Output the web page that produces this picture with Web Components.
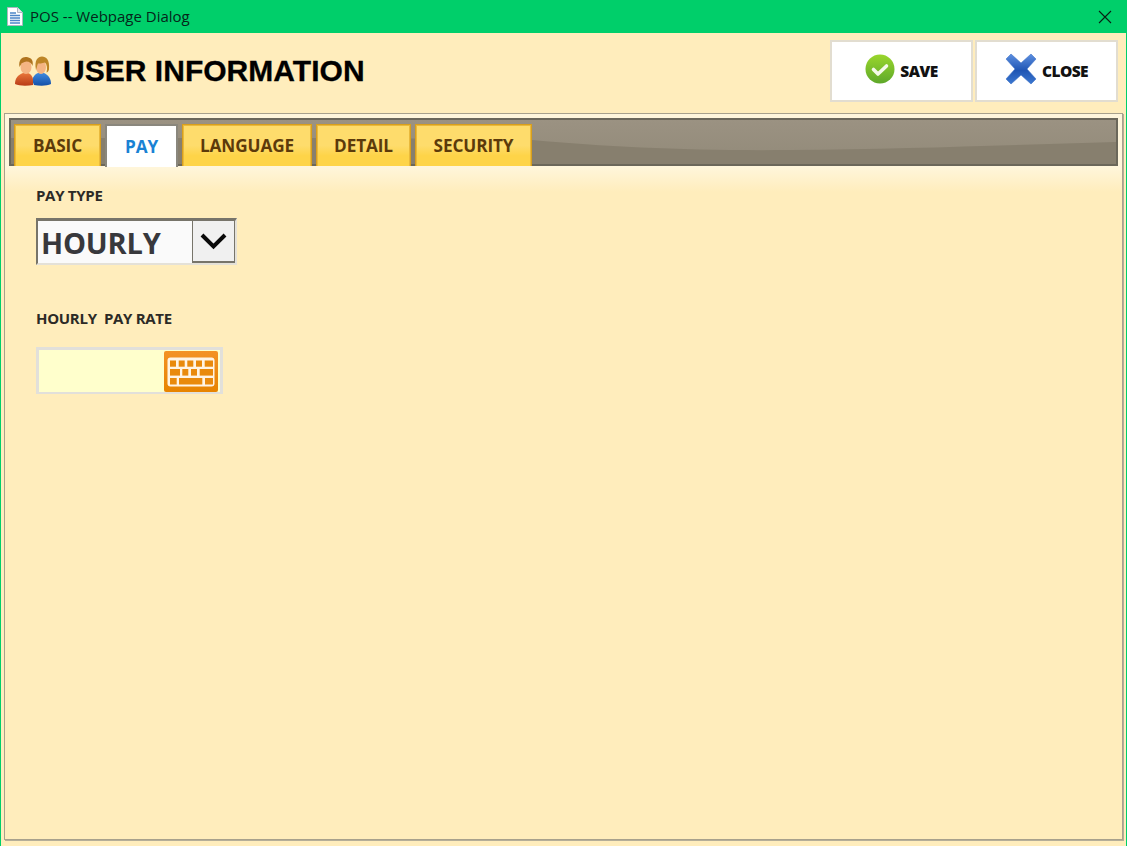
<!DOCTYPE html>
<html><head><meta charset="utf-8"><title>POS</title>
<style>
html,body{margin:0;padding:0;height:100%;overflow:hidden}
body{font-family:"Open Sans",sans-serif}
pos-dialog{width:1127px;height:846px}
</style></head><body>
<pos-dialog></pos-dialog>
<script>
function def(name,html){
  customElements.define(name,class extends HTMLElement{
    constructor(){super();this.attachShadow({mode:'open'}).innerHTML=html(this);}
  });
}
const ICON_PAGE=`<svg width="16" height="19" viewBox="0 0 16 19"><path d="M.5.5h10l5 5v13H.5z" fill="#fff" stroke="#aeb6c0"/><path d="M10.500.5v5h5" fill="#e4e9ef" stroke="#aeb6c0"/><path d="M3 6h6M3 8.500h10M3 11h10M3 13.500h10M3 16h10" stroke="#4d86c8" stroke-width="1.300"/></svg>`;
const ICON_USERS=`<svg width="38" height="30" viewBox="0 0 38 30"><defs>
<linearGradient id="r" x1="0" y1="0" x2="0" y2="1"><stop offset="0" stop-color="#e8763a"/><stop offset="1" stop-color="#b93c17"/></linearGradient>
<linearGradient id="b" x1="0" y1="0" x2="0" y2="1"><stop offset="0" stop-color="#3f8ade"/><stop offset="1" stop-color="#1450a8"/></linearGradient></defs>
<path d="M20 29c6 1 13 1 17-1 0-6-3-9-7-11h-6c-3 1-5 4-6 7z" fill="url(#b)"/>
<path d="M19 29c-6 1-14 1-18-1 0-6 3-9 8-11h5c3 1 5 4 5 7z" fill="url(#r)"/>
<ellipse cx="12" cy="11" rx="5.500" ry="7" fill="#f4b483"/>
<path d="M5.500 11C4 3 9 .5 12.500 1S20 3 18.500 10c-1-3-3-4.500-6-4.500-3 1-5 1-5.500 3z" fill="#b0741f"/>
<ellipse cx="27" cy="11" rx="5" ry="7" fill="#f4b483"/>
<path d="M22 14C20 4 24 .5 28 .5s8 3 7 13c-.5 2-1.500 3-2.500 3 1-4 .5-8-1.500-10-3 1-6 1-7 1-1 2-1 4-2 6.500z" fill="#bd8526"/>
</svg>`;
const ICON_OK=`<svg width="30" height="30" viewBox="0 0 30 30"><defs><linearGradient id="g" x1="0" y1="0" x2="0" y2="1"><stop offset="0" stop-color="#9ad62c"/><stop offset="1" stop-color="#5ea82a"/></linearGradient></defs><circle cx="15" cy="15" r="14.500" fill="url(#g)"/><path d="M8.500 15.500l4.500 4.500 8.500-8" fill="none" stroke="#f4f9e8" stroke-width="3.600" stroke-linecap="round" stroke-linejoin="round"/></svg>`;
const ICON_X=`<svg width="32" height="32" viewBox="0 0 32 32"><defs><linearGradient id="x" x1="0" y1="0" x2="0" y2="1"><stop offset="0" stop-color="#5d8fe0"/><stop offset=".55" stop-color="#1f55b4"/><stop offset="1" stop-color="#3c78d0"/></linearGradient></defs><path d="M6 1l10 9L26 1l5 5-9 10 9 10-5 5-10-9-10 9-5-5 9-10L1 6z" fill="url(#x)" stroke="#3f74c8" stroke-width=".6" stroke-linejoin="round"/></svg>`;
const ICON_KB=`<svg width="48" height="30" viewBox="0 0 48 30"><rect x=".5" y=".5" width="47" height="29" rx="3" fill="#fff4e4"/>
<g fill="#e98a0c"><rect x="3" y="3.500" width="6" height="6.200"/><rect x="11.700" y="3.500" width="6" height="6.200"/><rect x="20.300" y="3.500" width="6" height="6.200"/><rect x="29" y="3.500" width="6" height="6.200"/><rect x="37.700" y="3.500" width="8.300" height="6.200"/>
<rect x="3" y="12" width="10" height="6.600"/><rect x="15.300" y="12" width="6" height="6.600"/><rect x="24" y="12" width="6" height="6.600"/><rect x="32.700" y="12" width="13.300" height="6.600"/>
<rect x="3" y="21" width="6.700" height="6.500"/><rect x="12" y="21" width="23.300" height="6.500"/><rect x="38" y="21" width="8" height="6.500"/></g></svg>`;
const ICON_CLOSE=`<svg width="14" height="14" viewBox="0 0 14 14"><path d="M1 1l12 12M13 1L1 13" stroke="#0a1f14" stroke-width="1.100"/></svg>`;

def('title-bar',h=>`<style>:host{display:flex;align-items:center;height:33px;background:#00cf6a;color:#06251a;font:15px/33px "Open Sans",sans-serif;padding:0 15px 0 7px;box-sizing:border-box}
.t{margin-left:7px;flex:1}svg{display:block}</style>${ICON_PAGE}<span class="t"><slot></slot></span>${ICON_CLOSE}`);

def('action-button',h=>`<style>:host{display:flex;align-items:center;justify-content:center;gap:5px;width:143px;height:62px;box-sizing:border-box;background:#fff;border:2px solid #e2ddd0;font:800 15.500px "Open Sans",sans-serif;color:#111;letter-spacing:-.55px}
::slotted(svg){display:block}</style><slot name="icon"></slot><slot></slot>`);

def('tab-item',h=>`<style>:host{display:flex;align-items:center;justify-content:center;height:42px;margin-bottom:-2px;box-sizing:border-box;border:1px solid #d99f1c;border-bottom:0;box-shadow:inset 1px 1px 0 #e9b93c,inset -1px 0 0 #e9b93c;background:linear-gradient(#fedc6c 0,#fedc6c 50%,#fed448 75%,#fed448 100%);color:#5c3a0a;font:700 17.200px "Open Sans",sans-serif;letter-spacing:-.1px}
:host([active]){background:#fff;border:2px solid #8a877d;border-bottom:0;box-shadow:none;color:#1a82d4;height:43px;margin-bottom:-3px;position:relative;z-index:1}</style><slot></slot>`);

def('tab-strip',h=>`<style>:host{display:flex;gap:4px;align-items:flex-end;height:48px;box-sizing:border-box;padding:0 0 0 3px;border:2px solid #6b675a;background:linear-gradient(#9b9282,#928a79);position:relative}
svg{position:absolute;left:0;top:0;width:100%;height:100%}::slotted(*){position:relative}</style>
<svg viewBox="0 0 1105 44" preserveAspectRatio="none"><path d="M0 18C300 18 450 18 521 20 600 27 680 31 780 30 900 29 1000 25 1105 22V44H0z" fill="#877f6e"/></svg><slot></slot>`);

def('field-label',h=>`<style>:host{display:block;font:700 15px/18px "Open Sans",sans-serif;color:#2c2a26;letter-spacing:-.3px;white-space:pre}</style><slot></slot>`);

def('select-box',h=>`<style>:host{display:flex;width:201px;height:47px;box-sizing:border-box;border:2px solid #e4e1d8;border-top:3px solid #77746a;border-left-color:#77746a;background:#fafafa}
.v{flex:1;font:700 29px/44px "Open Sans",sans-serif;color:#38383c;padding-left:3px;letter-spacing:-.2px}
.b{width:43px;box-sizing:border-box;border:1px solid #77746a;border-bottom-width:2px;border-top:0;background:#f0f0f0;display:flex;align-items:center;justify-content:center}
svg{display:block}</style><span class="v"><slot></slot></span><span class="b"><svg width="28" height="18" viewBox="0 0 28 18"><path d="M2 3l11.500 11.500L25 3" fill="none" stroke="#0a0a0a" stroke-width="4"/></svg></span>`);

def('keypad-input',h=>`<style>:host{display:flex;width:187px;height:47px;box-sizing:border-box;border:3px solid #e2e0da;border-width:3px 3px 2px;background:#ffffcc}
.s{flex:1}.k{width:54px;margin:1px 2px 0 0;background:linear-gradient(#f39225,#e78400);border-radius:2px;display:flex;align-items:center;justify-content:center}svg{display:block}</style><span class="s"></span><span class="k">${ICON_KB}</span>`);

def('pay-form',h=>`<style>:host{display:block;flex:1;padding:20px 0 0 31px;background:linear-gradient(#fff6dc 0,#ffedbc 26px)}
.g{display:flex;flex-direction:column}.a{gap:14px;margin-bottom:44px}.c{gap:20px}</style>
<div class="g a"><field-label>PAY TYPE</field-label><select-box>HOURLY</select-box></div>
<div class="g c"><field-label>HOURLY  PAY RATE</field-label><keypad-input></keypad-input></div>`);

def('tab-panel',h=>`<style>:host{display:flex;flex-direction:column;flex:1;margin:0 0 6px 3px;width:1119px;box-sizing:border-box;border:1px solid #a8a18c;box-shadow:inset 0 0 0 1px #fff6dc, 1px 1px 0 #b5ae98;background:#ffedbc}
.w{padding:4px 4px 0 4px;background:#fff6dc}
</style><div class="w"><tab-strip>
<tab-item style="width:87px">BASIC</tab-item><tab-item active style="width:73px">PAY</tab-item><tab-item style="width:130px">LANGUAGE</tab-item><tab-item style="width:95px">DETAIL</tab-item><tab-item style="width:117px">SECURITY</tab-item>
</tab-strip></div><pay-form></pay-form>`);

def('pos-dialog',h=>`<style>:host{display:flex;flex-direction:column;box-sizing:border-box;background:#ffedbc;border-left:1px solid #00cf6a;border-right:1px solid #00cf6a}
title-bar{margin:0 -1px}
.h{display:flex;align-items:center;height:80px;padding:0 8px 4px 13px;box-sizing:border-box}
h1{flex:1;margin:0 0 0 11px;font:700 30px "Liberation Sans",Arial,sans-serif;color:#000;letter-spacing:.03px;-webkit-text-stroke:.3px #000}
.i{display:block;margin-top:4px}.bs{display:flex;gap:2px}
</style>
<title-bar>POS -- Webpage Dialog</title-bar>
<div class="h"><span class="i">${ICON_USERS}</span><h1>USER INFORMATION</h1><div class="bs"><action-button><span slot="icon">${ICON_OK}</span>SAVE</action-button><action-button><span slot="icon">${ICON_X}</span>CLOSE</action-button></div></div>
<tab-panel></tab-panel>`);
</script>
</body></html>
